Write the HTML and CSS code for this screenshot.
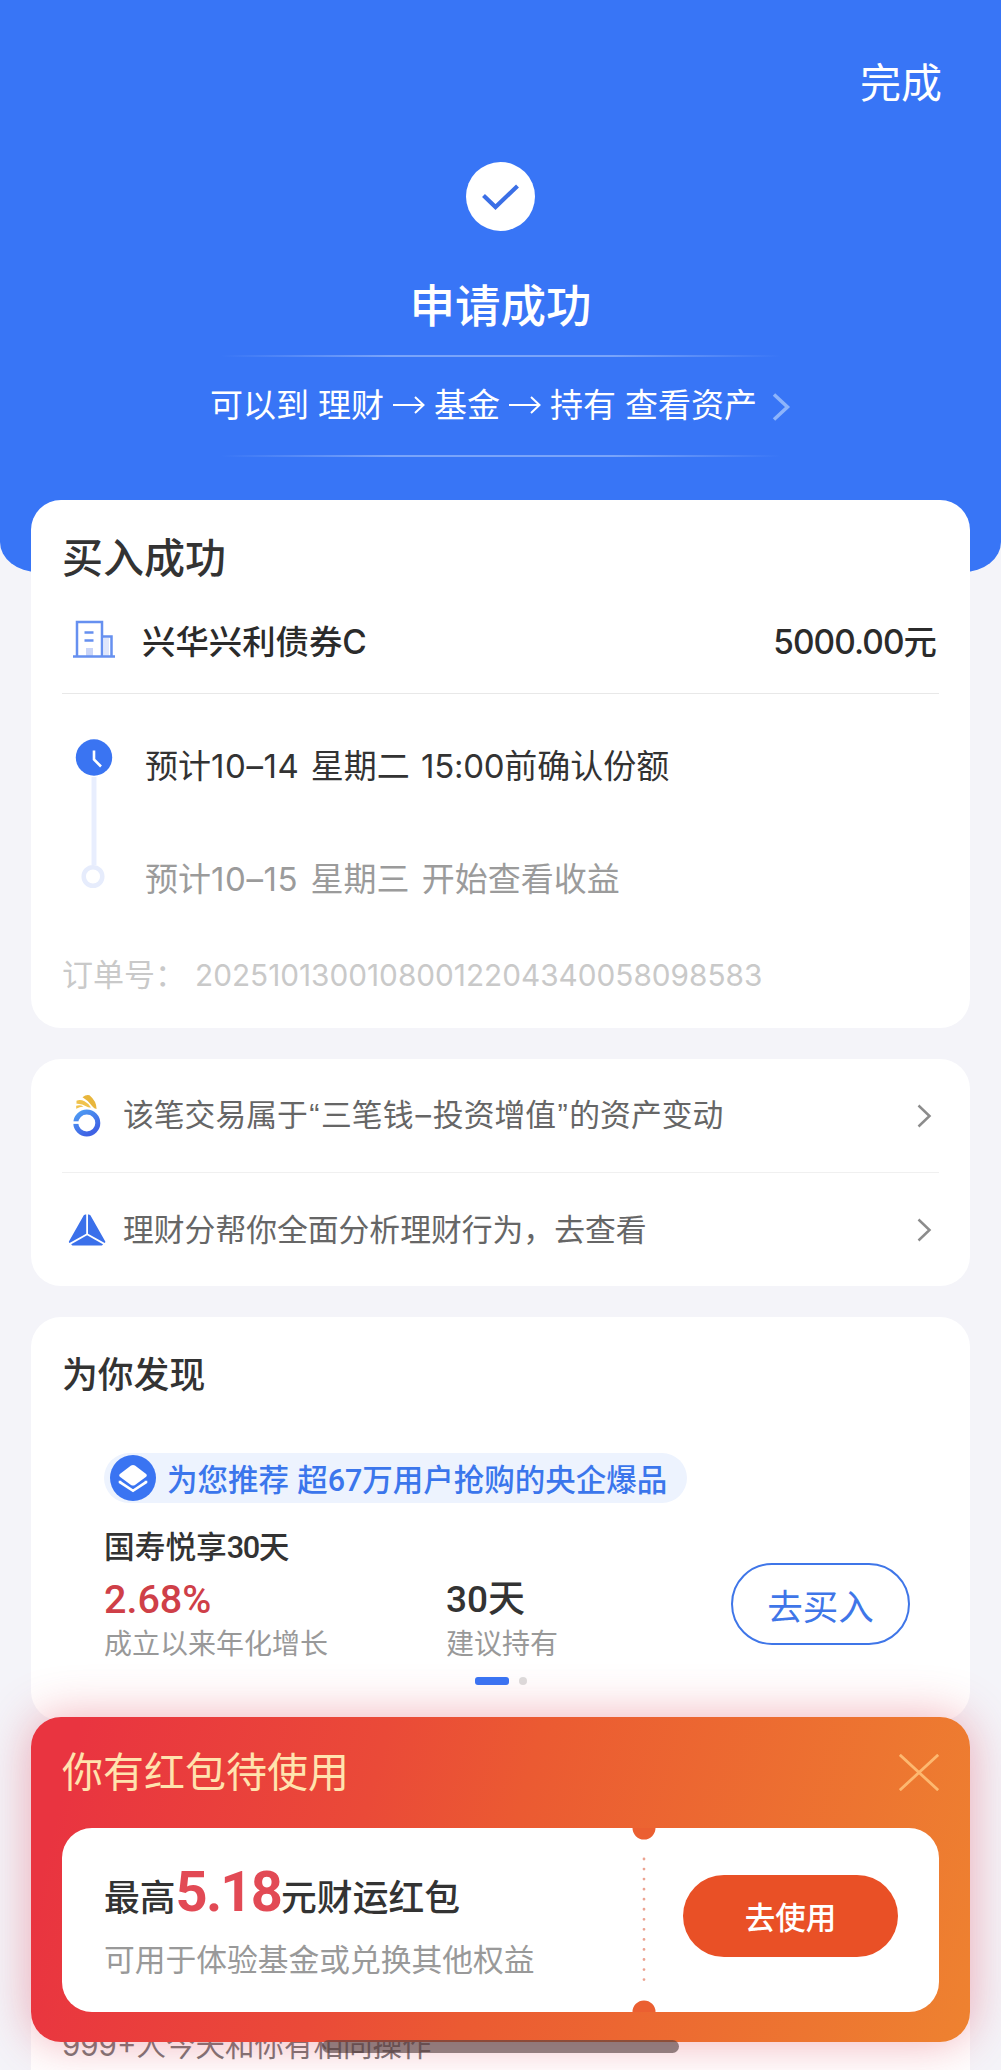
FILE: index.html
```html
<!DOCTYPE html>
<html lang="zh-CN">
<head>
<meta charset="utf-8">
<title>申请成功</title>
<link rel="stylesheet" href="styles.css">
</head>
<body>
<div class="page">
  <header class="hero">
    <div class="hero-bar"><span class="done">完成</span></div>
    <svg class="hero-check" viewBox="0 0 69 69"><circle cx="34.5" cy="34.5" r="34.5" fill="#fff"/><path d="M17.5 33.5 29.5 45 51.5 24" fill="none" stroke="#3b6fe6" stroke-width="4.2"/></svg>
    <h1 class="hero-title">申请成功</h1>
    <div class="hero-line"></div>
    <div class="hero-hint">
      <span>可以到</span><span>理财</span>
      <svg class="arrow" viewBox="0 0 32 24"><path d="M0 12H30M22 4 30.5 12 22 20" fill="none" stroke="#fff" stroke-width="2"/></svg>
      <span>基金</span>
      <svg class="arrow" viewBox="0 0 32 24"><path d="M0 12H30M22 4 30.5 12 22 20" fill="none" stroke="#fff" stroke-width="2"/></svg>
      <span>持有</span><span>查看资产</span>
      <svg class="hint-more" viewBox="0 0 19 28"><path d="M2 1.5 15.500 14 2 26.500" fill="none" stroke="#8db4fb" stroke-width="3.500"/></svg>
    </div>
    <div class="hero-line"></div>
  </header>

  <main class="cards">
    <section class="card order">
      <h2 class="order-title">买入成功</h2>
      <div class="fund">
        <svg class="fund-icon" viewBox="0 0 42 38"><path d="M13 28h7v8h-7z" fill="#c9d5f8"/><path d="M31 18h5v18h-5z" fill="#dfe6fb"/><path d="M4 36V2h25v34M29 16.500H38.500V36M0 36.500h42M11.500 12.500h9M11.500 20.500h9" fill="none" stroke="#6690f0" stroke-width="2.500"/></svg>
        <span class="fund-name">兴华兴利债券C</span>
        <span class="fund-amount"><i>5000.00</i>元</span>
      </div>
      <div class="timeline">
        <svg class="track" viewBox="0 0 38 150"><path d="M19 38v88" stroke="#e8eefe" stroke-width="5"/><circle cx="19" cy="18.500" r="18.200" fill="#3a74f2"/><path d="M19 11.500v9l7 7" fill="none" stroke="#fff" stroke-width="2.600"/><circle cx="18" cy="137.500" r="9.300" fill="#fff" stroke="#e6ecfc" stroke-width="4.500"/></svg>
        <div class="steps">
          <p class="step">预计<i class="date">10–14</i> 星期二 <i class="time">15:00</i>前确认份额</p>
          <p class="step muted">预计<i class="date">10–15</i> 星期三 开始查看收益</p>
        </div>
      </div>
      <p class="order-no"><span class="order-label">订单号：</span><span class="order-digits">20251013001080012204340058098583</span></p>
    </section>

    <section class="card links">
      <a class="link">
        <svg class="link-icon" viewBox="0 0 38 44"><defs><linearGradient id="ring" x1="0" y1="0" x2=".6" y2="1"><stop offset="0" stop-color="#4f9df3"/><stop offset="1" stop-color="#3f62e4"/></linearGradient></defs><circle cx="18.800" cy="29" r="11" fill="none" stroke="url(#ring)" stroke-width="5"/><path d="M4 28.600h8" stroke="#fff" stroke-width="2.600"/><path d="M14.500 3.200Q18 .3 21.500 1.200Q28.500 7 28.600 15Q26 14.500 24.500 12.500Q20.500 6.500 14.500 3.200z" fill="#e8b63c"/><path d="M8.500 6.800Q12 5 16.500 7.300Q21 9.800 23 13.400Q20.500 13.800 18.500 12.500Q14 9.500 8.500 9.800z" fill="#f0c24c"/><path d="M8.200 11.800Q12 10.600 15.500 12.400Q11.500 12.800 8.200 14.800z" fill="#f0c24c"/></svg>
        <span class="link-text">该笔交易属于<i class="quote">“</i>三笔钱<i class="dash">–</i>投资增值<i class="quote">”</i>的资产变动</span>
        <svg class="chevron" viewBox="0 0 15 24"><path d="M1.500 1.500 12.500 12 1.500 22.500" fill="none" stroke="#8c8c8c" stroke-width="2.500"/></svg>
      </a>
      <a class="link">
        <svg class="link-icon" viewBox="0 0 38 44"><g fill="#3b70ea"><path d="M18.200 6.500v19.200L1.500 35c-.8-.5-.8-1.200-.3-2L15.800 7.300c.5-.7 1.200-.8 2.400-.8z"/><path d="M20 6.500v19.200L36.700 35c.8-.5.8-1.200.3-2L22.400 7.300c-.5-.7-1.200-.8-2.400-.8z"/><path d="M19.100 27.200 35 36.300c-.5.900-1 1.200-2 1.200H5.200c-1 0-1.500-.3-2-1.200z"/></g></svg>
        <span class="link-text">理财分帮你全面分析理财行为，去查看</span>
        <svg class="chevron" viewBox="0 0 15 24"><path d="M1.500 1.500 12.500 12 1.500 22.500" fill="none" stroke="#8c8c8c" stroke-width="2.500"/></svg>
      </a>
    </section>

    <section class="card discover">
      <h2 class="discover-title">为你发现</h2>
      <div class="offer">
        <div class="tag">
          <svg class="tag-icon" viewBox="0 0 46 46"><circle cx="23" cy="23" r="23" fill="#3a74f2"/><path d="M21 10.500q2-1.200 4 0l10.800 8.200q2 1.700 0 3.400L25 30q-2 1.200-4 0L10.200 22.100q-2-1.700 0-3.400z" fill="#fff"/><path d="M10 25.800v1.400L23 35.800 36 27.200v-1.400" fill="none" stroke="#fff" stroke-width="2.600"/></svg>
          <span class="tag-text">为您推荐 超<b>67</b>万用户抢购的央企爆品</span>
        </div>
        <div class="offer-body">
          <div class="metric metric-rate">
            <p class="product">国寿悦享<b>30</b>天</p>
            <p class="value rate">2.68%</p>
            <p class="caption">成立以来年化增长</p>
          </div>
          <div class="metric metric-term">
            <p class="value">30天</p>
            <p class="caption">建议持有</p>
          </div>
          <button class="buy">去买入</button>
        </div>
      </div>
      <div class="pager"><span class="pager-on"></span><span class="pager-off"></span></div>
    </section>

    <section class="card feed"><p class="feed-title">999+人今天和你有相同操作</p></section>
  </main>

  <aside class="coupon">
    <div class="coupon-head">
      <span class="coupon-title">你有红包待使用</span>
      <svg class="close" viewBox="0 0 40 37"><path d="M.8.800 39.200 36.200M39.200.800.800 36.200" stroke="#fdb870" stroke-width="2.800"/></svg>
    </div>
    <div class="ticket">
      <div class="ticket-info">
        <p class="ticket-main">最高<b>5.18</b>元财运红包</p>
        <p class="ticket-sub">可用于体验基金或兑换其他权益</p>
      </div>
      <svg class="perforation" viewBox="0 0 24 184"><path d="M.5 0h23a11.500 11.500 0 0 1-23 0zM.5 184h23a11.500 11.500 0 0 0-23 0z" fill="#eb5f31"/><path d="M12 31v124" stroke="#eba391" stroke-width="2.800" stroke-linecap="round" stroke-dasharray="0 10.050"/></svg>
      <button class="use">去使用</button>
    </div>
  </aside>
  <div class="home-indicator"></div>
</div>
</body>
</html>
```
FILE: styles.css
```css
* { box-sizing: border-box; }
body, h1, h2, p { margin: 0; }
body { background: #f4f4f9; }
svg { display: block; flex: none; }
button { font: inherit; padding: 0; border: 0; }
i, b { font-style: normal; font-weight: inherit; }

.page {
  position: relative;
  width: 1001px;
  height: 2070px;
  overflow: hidden;
  font-family: Inter, "Noto Sans CJK SC", sans-serif;
  color: #333;
  white-space: nowrap;
}

/* Result header */
.hero {
  height: 572px;
  padding-top: 53px;
  display: flex;
  flex-direction: column;
  align-items: center;
  background: #3875f6;
  color: #fff;
  border-radius: 0 0 38px 38px / 0 0 30px 30px;
}
.hero-bar { align-self: stretch; text-align: right; padding-right: 59px; font-size: 41px; line-height: 60px; }
.hero-check { width: 69px; height: 69px; margin-top: 49px; }
.hero-title { margin-top: 46px; margin-bottom: 18px; font-size: 45.500px; line-height: 60px; font-weight: 500; }
.hero-line { width: 560px; height: 2px; background: linear-gradient(90deg, rgba(120,165,255,0), #79a4fb 30%, #79a4fb 70%, rgba(120,165,255,0)); }
.hero-hint { height: 98px; display: flex; align-items: center; gap: 9px; font-size: 33px; line-height: 98px; padding-bottom: 2px; }
.arrow { width: 32px; height: 24px; }
.hint-more { width: 19px; height: 28px; margin: 4px 0 0 6px; }

/* Cards */
.cards { margin: -72px 31px 0; display: flex; flex-direction: column; gap: 31px; }
.card { background: #fff; border-radius: 30px; padding: 0 31px; }

.order { height: 528px; }
.order-title { padding-top: 30px; font-size: 41px; line-height: 56px; font-weight: 500; }
.fund { display: flex; align-items: center; height: 108px; padding: 4px 2px 0 11px; border-bottom: 1px solid #e8e8e8; font-size: 33.400px; font-weight: 500; color: #2b2b2b; line-height: 60px; }
.fund-icon { width: 42px; height: 38px; margin-top: -6px; }
.fund-name { margin-left: 27px; flex: 1; }
.fund-amount i { letter-spacing: -.9px; }
.timeline { display: flex; padding: 45px 0 0 13px; }
.track { width: 38px; height: 150px; }
.steps { margin-left: 32px; padding-top: 2px; }
.step { font-size: 33px; line-height: 50px; height: 113px; word-spacing: 2px; }
.step + .step { height: 50px; word-spacing: 3px; }
.step.muted { color: #9b9b9b; }
.date { letter-spacing: .6px; }
.time { letter-spacing: -.3px; }
.order-no { display: flex; margin-top: 46px; font-size: 31px; line-height: 50px; color: #c9c9c9; }
.order-label { width: 133px; }
.order-digits { font-size: 29.750px; }

.links { height: 227px; }
.link { display: flex; align-items: center; height: 113px; padding: 0 7px 0 6px; font-size: 30.800px; line-height: 44px; color: #666; }
.link + .link { border-top: 1px solid #f0f0f0; height: 114px; }
.link-icon { width: 38px; height: 44px; }
.link-text { flex: 1; margin-left: 17px; }
.quote { font-family: "Liberation Sans", sans-serif; padding: 0 1.500px; }
.dash { padding: 0 2px; }
.chevron { width: 15px; height: 24px; }

.discover { height: 404px; }
.discover-title { padding-top: 31px; font-size: 35.800px; line-height: 54px; font-weight: 500; }
.offer { padding: 51px 29px 0 42px; }
.tag { display: flex; align-items: center; width: 583px; height: 50px; padding-left: 6px; gap: 11px; border-radius: 25px; background: #edf3fe; color: #3b76ec; font-size: 30.500px; line-height: 46px; font-weight: 500; }
.tag-icon { width: 46px; height: 46px; }
.tag-text { padding-top: 4px; }
.tag b, .product b, .value { font-family: Roboto, "Noto Sans CJK SC", sans-serif; }
.offer-body { display: flex; align-items: flex-end; padding-top: 24px; }
.metric-rate { width: 342px; }
.product { font-size: 30.700px; line-height: 40px; font-weight: 500; }
.product b { letter-spacing: -1.500px; }
.value { margin-top: 9px; font-size: 37px; line-height: 46px; font-weight: 500; }
.rate { font-size: 39.500px; color: #cf3f48; }
.caption { margin-top: 1px; font-size: 28px; line-height: 40px; color: #999; }
.buy { width: 179px; height: 82px; margin: 0 0 19px auto; border: 2.500px solid #3f76e8; border-radius: 41px; background: none; color: #3f76e8; font-size: 35.500px; }
.pager { display: flex; justify-content: center; gap: 10px; padding-top: 13px; }
.pager-on { width: 34px; height: 8px; border-radius: 3px; background: #3875f6; }
.pager-off { width: 8px; height: 8px; border-radius: 50%; background: #ddd; }

.feed { height: 400px; padding-top: 273px; }
.feed-title { font-size: 29.500px; line-height: 40px; color: #777; }

/* Coupon sheet floating above the page */
.coupon {
  position: absolute;
  left: 31px;
  right: 31px;
  top: 1717px;
  height: 325px;
  padding: 0 31px;
  border-radius: 30px;
  background: linear-gradient(105deg, #e93440 5%, #ea4a38 35%, #eb5a32 50%, #ee8230 100%);
  box-shadow: 0 0 48px rgba(222, 60, 80, .42);
}
.coupon-head { display: flex; justify-content: space-between; align-items: center; height: 110.500px; color: #ffe3ae; font-size: 41px; line-height: 60px; }
.close { width: 40px; height: 37px; }
.ticket { display: flex; align-items: center; height: 184px; background: #fff; border-radius: 30px; padding-left: 42px; padding-right: 41px; }
.ticket-info { width: 528px; padding-top: 6px; }
.ticket-main { font-size: 35.800px; line-height: 60px; font-weight: 500; }
.ticket-main b { font-family: Roboto, sans-serif; font-weight: 700; font-size: 56px; letter-spacing: -1.800px; color: #e24a55; line-height: 1; }
.ticket-sub { margin-top: 10px; font-size: 30.750px; line-height: 44px; color: #999; }
.perforation { width: 24px; height: 184px; }
.use { width: 215px; height: 82px; margin: 0 0 7px auto; border-radius: 41px; background: #e95026; color: #fff; font-size: 30.500px; font-weight: 500; }

.home-indicator { position: absolute; left: 322px; top: 2040px; width: 357px; height: 13px; border-radius: 6.500px; background: rgba(82, 62, 62, .62); }
```
